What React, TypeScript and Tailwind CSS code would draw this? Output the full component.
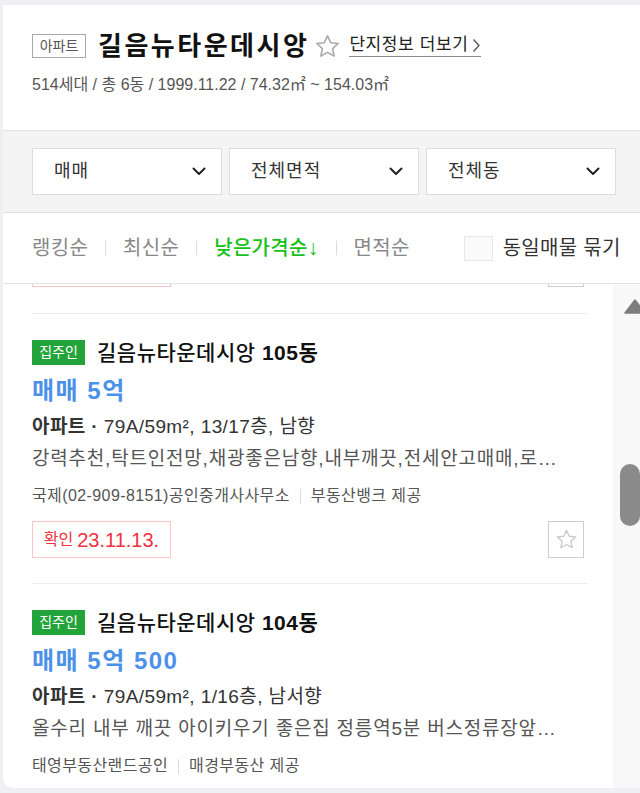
import React from "react";

const FONT = { fontFamily: '"Liberation Sans", "Noto Sans CJK KR", sans-serif' };

function Star({ size, color }: { size: number; color: string }) {
  return (
    <svg width={size} height={size} viewBox="0 0 24 24" fill="none">
      <path
        d="M12 2.5l2.85 6.1 6.65.75-4.95 4.55 1.35 6.6L12 17.2l-5.9 3.3 1.35-6.6L2.5 9.35l6.65-.75L12 2.5z"
        stroke={color}
        strokeWidth={1.4}
        strokeLinejoin="round"
      />
    </svg>
  );
}

function Chevron() {
  return (
    <svg width="14" height="9" viewBox="0 0 14 9" fill="none">
      <path d="M1.5 1.5L7 7l5.5-5.5" stroke="#222" strokeWidth="2" strokeLinecap="round" strokeLinejoin="round" />
    </svg>
  );
}

function Select({ label }: { label: string }) {
  return (
    <div className="flex h-[47px] w-[190px] items-center justify-between border border-[#dcdcdc] bg-white pl-[21px] pr-[15px]">
      <span className="text-[18px] tracking-[1px] text-[#333]">{label}</span>
      <Chevron />
    </div>
  );
}

function Sep({ h = 14, mx = 17 }: { h?: number; mx?: number }) {
  return <span className="inline-block w-px shrink-0 bg-[#ddd]" style={{ height: h, marginLeft: mx, marginRight: mx }} />;
}

function BottomRow({ date }: { date: string }) {
  return (
    <div className="flex items-center justify-between">
      <div className="flex h-[37px] w-[139px] items-center justify-center border border-[#ffc4c8] text-[#f0313f]">
        <span className="mr-[4px] text-[16px]">확인</span>
        <span className="text-[20px]">{date}</span>
      </div>
      <div className="mr-[3px] flex h-[37px] w-[36px] items-center justify-center border border-[#cfcfcf]">
        <Star size={23} color="#c7cbd1" />
      </div>
    </div>
  );
}

function Item({
  dong,
  price,
  info,
  desc,
  agent,
  provider,
  date,
}: {
  dong: string;
  price: string;
  info: string;
  desc: string;
  agent: string;
  provider: string;
  date?: string;
}) {
  return (
    <div className="border-t border-[#ebebeb] pt-[26px] pb-[25px]">
      <div className="flex h-[25px] items-center">
        <span className="flex h-[25px] w-[53px] items-center justify-center bg-[#22a43a] text-[14px] text-white">집주인</span>
        <span className="ml-[12px] whitespace-nowrap text-[21px] font-medium tracking-[0.5px] text-[#111]">
          길음뉴타운데시앙 <span className="font-bold">{dong}</span>
        </span>
      </div>
      <div className="mt-[12px] h-[28px] text-[24px] font-bold leading-[28px] tracking-[1.5px] text-[#4b91ea]">{price}</div>
      <div className="mt-[10px] h-[23px] whitespace-nowrap text-[19px] leading-[23px] tracking-[0.4px] text-[#333]">
        <span className="font-bold">아파트</span> <span className="font-bold">·</span> {info}
      </div>
      <div className="mt-[9px] h-[23px] overflow-hidden text-ellipsis whitespace-nowrap pr-[20px] text-[19px] leading-[23px] tracking-[0.8px] text-[#555]">
        {desc}
      </div>
      <div className="mt-[16px] flex h-[20px] items-center whitespace-nowrap text-[16px] tracking-[0.4px] text-[#555]">
        <span>{agent}</span>
        <Sep h={15} mx={10} />
        <span>{provider}</span>
      </div>
      {date && (
        <div className="mt-[15px]">
          <BottomRow date={date} />
        </div>
      )}
    </div>
  );
}

export default function App() {
  return (
    <div className="h-[793px] w-[640px] overflow-hidden bg-[#eef0f4] pl-[3px] pt-[5px]" style={FONT}>
      <div className="flex h-[783px] flex-col overflow-hidden rounded-bl-[10px] bg-white">
        {/* Header */}
        <div className="h-[125px] shrink-0 pl-[29px] pt-[28px]">
          <div className="flex h-[26px] items-center whitespace-nowrap">
            <span className="flex h-[24px] w-[54px] items-center justify-center border border-[#a8a8a8] text-[14px] text-[#555]">아파트</span>
            <span className="ml-[12px] text-[26px] font-bold leading-[26px] tracking-[2.5px] text-[#111]">길음뉴타운데시앙</span>
            <span className="ml-[5px] flex items-center">
              <Star size={27} color="#a9a9a9" />
            </span>
            <span className="ml-[8px] flex items-center border-b border-[#888] pb-[1px] text-[17px] leading-[20px] tracking-[0.6px] text-[#222]">
              단지정보 더보기
              <svg width="9" height="15" viewBox="0 0 9 15" className="ml-[4px]" fill="none">
                <path d="M1.5 1.5L7 7.5l-5.5 6" stroke="#555" strokeWidth="1.3" />
              </svg>
            </span>
          </div>
          <div className="mt-[16px] h-[20px] text-[16px] leading-[20px] text-[#555]">
            514세대 / 총 6동 / 1999.11.22 / 74.32㎡ ~ 154.03㎡
          </div>
        </div>

        {/* Filters */}
        <div className="flex h-[83px] shrink-0 items-center gap-[7px] border-y border-[#e0e0e0] bg-[#f4f4f4] pl-[29px]">
          <Select label="매매" />
          <Select label="전체면적" />
          <Select label="전체동" />
        </div>

        {/* Sort row */}
        <div className="flex h-[71px] shrink-0 items-center whitespace-nowrap border-b border-[#e3e3e3] pl-[29px] text-[20px] tracking-[0.3px]">
          <span className="text-[#888]">랭킹순</span>
          <Sep />
          <span className="text-[#888]">최신순</span>
          <Sep />
          <span className="font-medium text-[#17c01b]">
            낮은가격순<span className="text-[21px]">↓</span>
          </span>
          <Sep />
          <span className="text-[#888]">면적순</span>
          <span className="ml-[54px] h-[25px] w-[29px] shrink-0 border border-[#e6e6e6] bg-[#fafafa]" />
          <span className="ml-[10px] text-[#333]">동일매물 묶기</span>
        </div>

        {/* List */}
        <div className="flex min-h-0 flex-1">
          <div className="min-w-0 flex-1 overflow-hidden pl-[29px] pr-[26px]">
            <div className="-mt-[34px]">
              <div className="pb-[26px]">
                <BottomRow date="23.11.13." />
              </div>
              <Item
                dong="105동"
                price="매매 5억"
                info="79A/59m², 13/17층, 남향"
                desc="강력추천,탁트인전망,채광좋은남향,내부깨끗,전세안고매매,로열층,역세권"
                agent="국제(02-909-8151)공인중개사사무소"
                provider="부동산뱅크 제공"
                date="23.11.13."
              />
              <Item
                dong="104동"
                price="매매 5억 500"
                info="79A/59m², 1/16층, 남서향"
                desc="올수리 내부 깨끗 아이키우기 좋은집 정릉역5분 버스정류장앞위치"
                agent="태영부동산랜드공인"
                provider="매경부동산 제공"
              />
            </div>
          </div>
          <div className="flex w-[27px] shrink-0 flex-col items-end bg-[#f8f8f8]">
            <svg width="22" height="15" viewBox="0 0 22 15" className="mt-[15px] -mr-[6px]">
              <path d="M11 1L21 14H1z" fill="#7d7d7d" stroke="#7d7d7d" strokeLinejoin="round" strokeWidth="1.5" />
            </svg>
            <div className="mt-[150px] h-[62px] w-[20px] rounded-[10px] bg-[#8a8a8a]" />
          </div>
        </div>
      </div>
    </div>
  );
}
